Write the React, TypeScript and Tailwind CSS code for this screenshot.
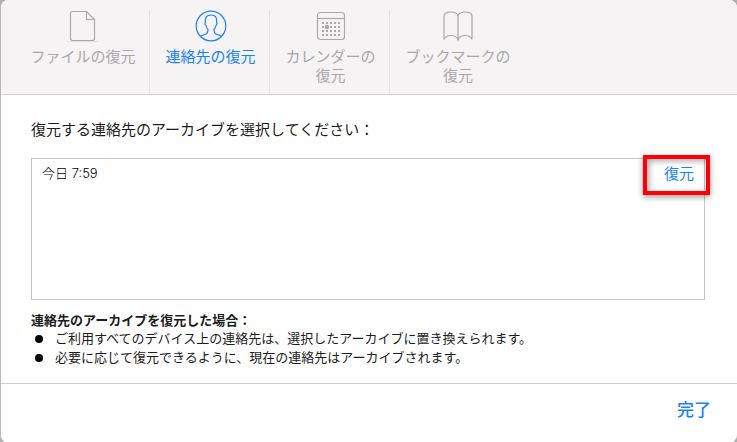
import { useState } from 'react';

const FileIcon = () => (
  <svg width="32" height="32" viewBox="0 0 32 32" fill="none" stroke="currentColor" strokeWidth="1.2" aria-hidden="true">
    <path d="M5.500 1.500h14L27.500 9.500v19a2 2 0 0 1-2 2h-20a2 2 0 0 1-2-2v-25a2 2 0 0 1 2-2z" />
    <path d="M19.500 1.500v8h8" />
    <path d="M1 31.500h30" strokeOpacity="0.3" />
  </svg>
);

const ContactIcon = () => (
  <svg width="32" height="32" viewBox="0 0 32 32" fill="none" stroke="currentColor" strokeWidth="1.2" aria-hidden="true">
    <circle cx="16" cy="16" r="14.8" />
    <path d="M5.500 26L10.500 24.300C12.600 23.600 13 22.500 13 19.500C11.600 18.300 11.300 17 11 15.500C9.900 15 9.600 12.800 10.400 12.200C9.800 7.500 11.500 5 16 5S22.200 7.500 21.600 12.200C22.400 12.800 22.100 15 21 15.500C20.700 17 20.400 18.300 19 19.500C19 22.500 19.400 23.600 21.500 24.300L26.500 26" />
  </svg>
);

const CalendarIcon = () => (
  <svg width="32" height="32" viewBox="0 0 32 32" fill="none" stroke="currentColor" strokeWidth="1.2" aria-hidden="true">
    <rect x="2.500" y="2.500" width="27" height="27" rx="3" />
    <path d="M2.500 8.500h27" />
    <path d="M7 13h18M7 17h18M7 21h18M7 25h18" strokeWidth="2" strokeDasharray="2 2" />
    <circle cx="12" cy="17" r="2.200" fill="currentColor" stroke="none" />
  </svg>
);

const BookIcon = () => (
  <svg width="32" height="32" viewBox="0 0 32 32" fill="none" stroke="currentColor" strokeWidth="1.2" aria-hidden="true">
    <path d="M16 30V6c-.500-3-3.500-4-7-4s-7 1-7 4v23.500c1-2.500 3.500-4 7-4s6 1.500 7 4.500c1-3 3.500-4.500 7-4.500s6 1.500 7 4V6c0-3-3.500-4-7-4s-6.500 1-7 4" />
  </svg>
);

const tabs = [
  { id: 'files', lines: ['ファイルの復元'], icon: FileIcon, width: 'w-[149px] pl-4' },
  { id: 'contacts', lines: ['連絡先の復元'], icon: ContactIcon, width: 'w-[120px] pl-0.5' },
  { id: 'calendars', lines: ['カレンダーの', '復元'], icon: CalendarIcon, width: 'w-[120px] pl-0.5' },
  { id: 'bookmarks', lines: ['ブックマークの', '復元'], icon: BookIcon, width: 'w-[136px]' },
];

const notes = [
  'ご利用すべてのデバイス上の連絡先は、選択したアーカイブに置き換えられます。',
  '必要に応じて復元できるように、現在の連絡先はアーカイブされます。',
];

const App = () => {
  const [activeTab, setActiveTab] = useState('contacts');

  return (
    <div className="min-h-screen bg-[#b0b0b0] font-['Inter','Noto_Sans_CJK_JP',sans-serif]">
      <div className="flex min-h-screen flex-col overflow-hidden rounded-lg border-l border-[#b8b8b8] bg-white">
        <nav className="flex border-b border-[#d4d2d3] bg-[#f5f3f4] pt-2.5">
          {tabs.map(({ id, lines, icon: Icon, width }) => (
            <button
              key={id}
              type="button"
              onClick={() => setActiveTab(id)}
              className={`${width} flex h-[84px] flex-col items-center border-r border-[#e2e0e1] text-[15px] leading-[19px] last:border-r-0 ${
                activeTab === id ? 'text-[#1a82f7]' : 'text-[#aaa8a9]'
              }`}
            >
              <Icon />
              <span className="mt-[5px]">
                {lines.map((line) => (
                  <span key={line} className="block whitespace-nowrap">
                    {line}
                  </span>
                ))}
              </span>
            </button>
          ))}
        </nav>

        <main className="flex-1 pt-[25px] pr-8 pb-4 pl-[30px] text-[13px] text-[#1c1c1c]">
          <h1 className="text-[15px] leading-5">復元する連絡先のアーカイブを選択してください：</h1>

          <ul className="mt-[18px] h-[142px] border border-[#c6c6c6]">
            <li className="relative flex h-[30px] items-center justify-between px-2.5">
              <span className="font-light text-black">今日 7:59</span>
              <button type="button" className="text-[15px] text-[#1a82f7]">
                復元
              </button>
              <span className="pointer-events-none absolute -top-1 -right-1.5 h-10 w-[67px] border-4 border-[#fb0007] shadow-[0_2px_6px_rgba(0,0,0,0.4),inset_2px_2px_6px_rgba(0,0,0,0.35)]" />
            </li>
          </ul>

          <h2 className="mt-[11px] leading-[19px] font-bold text-[#1c1c1c]">連絡先のアーカイブを復元した場合：</h2>
          <ul className="-mt-px leading-[19px]">
            {notes.map((note) => (
              <li key={note} className="flex items-center gap-3 pl-1">
                <span className="h-2 w-2 shrink-0 rounded-full bg-black" />
                {note}
              </li>
            ))}
          </ul>
        </main>

        <footer className="flex h-[60px] items-center justify-end border-t border-[#cfcfcf] pr-[26px] pb-2">
          <button type="button" className="text-[17px] leading-6 font-medium text-[#1a82f7]">
            完了
          </button>
        </footer>
      </div>
    </div>
  );
};

export default App;
